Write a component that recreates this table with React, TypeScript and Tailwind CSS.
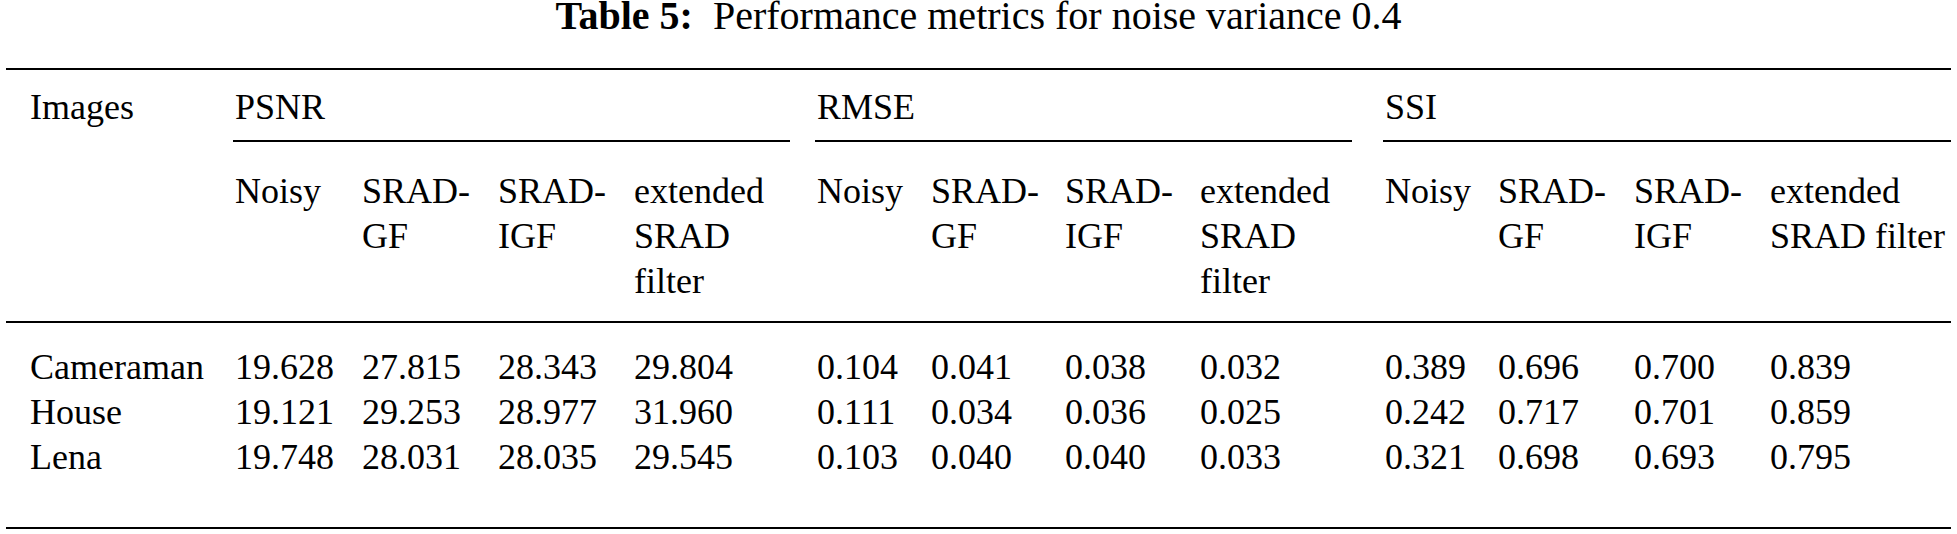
const groups = ["PSNR", "RMSE", "SSI"];

const rows = [
  { name: "Cameraman", values: ["19.628", "27.815", "28.343", "29.804", "0.104", "0.041", "0.038", "0.032", "0.389", "0.696", "0.700", "0.839"] },
  { name: "House", values: ["19.121", "29.253", "28.977", "31.960", "0.111", "0.034", "0.036", "0.025", "0.242", "0.717", "0.701", "0.859"] },
  { name: "Lena", values: ["19.748", "28.031", "28.035", "29.545", "0.103", "0.040", "0.040", "0.033", "0.321", "0.698", "0.693", "0.795"] },
];

const gridCols =
  "grid grid-cols-[229px_127px_136px_136px_183px_114px_134px_135px_185px_113px_136px_136px_181px]";

function SubHeaders({ last }: { last: boolean }) {
  return (
    <>
      <div>Noisy</div>
      <div>
        SRAD-
        <br />
        GF
      </div>
      <div>
        SRAD-
        <br />
        IGF
      </div>
      <div>
        {last ? (
          <>
            extended
            <br />
            SRAD filter
          </>
        ) : (
          <>
            extended
            <br />
            SRAD
            <br />
            filter
          </>
        )}
      </div>
    </>
  );
}

export default function App() {
  return (
    <div className="h-[534px] w-[1957px] overflow-hidden bg-white px-[6px] [font-family:Liberation_Serif,Times_New_Roman,serif] text-black">
      <h2 className="text-center text-[40px] leading-[32px]">
        <span className="font-bold">Table 5:</span>
        <span className="ml-[20px]">Performance metrics for noise variance 0.4</span>
      </h2>

      <div className="mt-[36px] border-t-2 border-black text-[36px]">
        {/* header */}
        <div className={`${gridCols} border-b-2 border-black pb-[17px] pt-[13px]`}>
          <div className="row-span-2 pl-[24px] leading-[48px]">Images</div>
          {groups.map((g, i) => (
            <div key={g} className="col-span-4">
              <div className="leading-[48px]">{g}</div>
              <div
                className={`-ml-[2px] mt-[9px] border-b-2 border-black ${
                  i === 0 ? "mr-[27px]" : i === 1 ? "mr-[33px]" : "mr-0"
                }`}
              />
            </div>
          ))}
          <div className="col-span-12 col-start-2 mt-[27px] grid grid-cols-[127px_136px_136px_183px_114px_134px_135px_185px_113px_136px_136px_181px] leading-[45px]">
            <SubHeaders last={false} />
            <SubHeaders last={false} />
            <SubHeaders last={true} />
          </div>
        </div>

        {/* body */}
        <div className="border-b-2 border-black pb-[47px] pt-[22px] leading-[45px]">
          {rows.map((r) => (
            <div key={r.name} className={gridCols}>
              <div className="pl-[24px]">{r.name}</div>
              {r.values.map((v, i) => (
                <div key={i}>{v}</div>
              ))}
            </div>
          ))}
        </div>
      </div>
    </div>
  );
}
